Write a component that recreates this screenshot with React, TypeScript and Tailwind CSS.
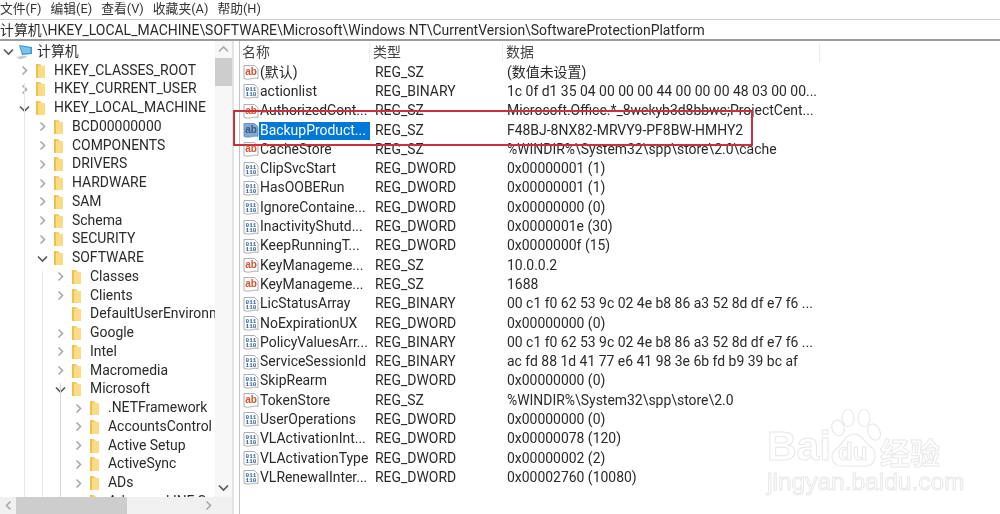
type TreeRow = { label: string; level: number; open?: boolean; leaf?: boolean };

const treeRows: TreeRow[] = [
  { label: "HKEY_CLASSES_ROOT", level: 1 },
  { label: "HKEY_CURRENT_USER", level: 1 },
  { label: "HKEY_LOCAL_MACHINE", level: 1, open: true },
  { label: "BCD00000000", level: 2 },
  { label: "COMPONENTS", level: 2 },
  { label: "DRIVERS", level: 2 },
  { label: "HARDWARE", level: 2 },
  { label: "SAM", level: 2 },
  { label: "Schema", level: 2 },
  { label: "SECURITY", level: 2 },
  { label: "SOFTWARE", level: 2, open: true },
  { label: "Classes", level: 3 },
  { label: "Clients", level: 3 },
  { label: "DefaultUserEnvironment", level: 3, leaf: true },
  { label: "Google", level: 3 },
  { label: "Intel", level: 3 },
  { label: "Macromedia", level: 3 },
  { label: "Microsoft", level: 3, open: true },
  { label: ".NETFramework", level: 4 },
  { label: "AccountsControl", level: 4 },
  { label: "Active Setup", level: 4 },
  { label: "ActiveSync", level: 4 },
  { label: "ADs", level: 4 },
  { label: "Advanced INF Setup", level: 4 },
];

const indents: Record<number, string> = {
  1: "pl-[19px]",
  2: "pl-[37px]",
  3: "pl-[55px]",
  4: "pl-[73px]",
};

const values: [string, string, string][] = [
  ["(默认)", "REG_SZ", "(数值未设置)"],
  ["actionlist", "REG_BINARY", "1c 0f d1 35 04 00 00 00 44 00 00 00 48 03 00 00..."],
  ["AuthorizedCont...", "REG_SZ", "Microsoft.Office.*_8wekyb3d8bbwe;ProjectCent..."],
  ["BackupProduct...", "REG_SZ", "F48BJ-8NX82-MRVY9-PF8BW-HMHY2"],
  ["CacheStore", "REG_SZ", "%WINDIR%\\System32\\spp\\store\\2.0\\cache"],
  ["ClipSvcStart", "REG_DWORD", "0x00000001 (1)"],
  ["HasOOBERun", "REG_DWORD", "0x00000001 (1)"],
  ["IgnoreContaine...", "REG_DWORD", "0x00000000 (0)"],
  ["InactivityShutd...", "REG_DWORD", "0x0000001e (30)"],
  ["KeepRunningT...", "REG_DWORD", "0x0000000f (15)"],
  ["KeyManageme...", "REG_SZ", "10.0.0.2"],
  ["KeyManageme...", "REG_SZ", "1688"],
  ["LicStatusArray", "REG_BINARY", "00 c1 f0 62 53 9c 02 4e b8 86 a3 52 8d df e7 f6 ..."],
  ["NoExpirationUX", "REG_DWORD", "0x00000000 (0)"],
  ["PolicyValuesArr...", "REG_BINARY", "00 c1 f0 62 53 9c 02 4e b8 86 a3 52 8d df e7 f6 ..."],
  ["ServiceSessionId", "REG_BINARY", "ac fd 88 1d 41 77 e6 41 98 3e 6b fd b9 39 bc af"],
  ["SkipRearm", "REG_DWORD", "0x00000000 (0)"],
  ["TokenStore", "REG_SZ", "%WINDIR%\\System32\\spp\\store\\2.0"],
  ["UserOperations", "REG_DWORD", "0x00000000 (0)"],
  ["VLActivationInt...", "REG_DWORD", "0x00000078 (120)"],
  ["VLActivationType", "REG_DWORD", "0x00000002 (2)"],
  ["VLRenewalInter...", "REG_DWORD", "0x00002760 (10080)"],
];

function Chevron({ dir }: { dir: "right" | "down" | "up" | "left" }) {
  const paths = {
    right: "M3.5 1.5 L7.5 5.5 L3.5 9.5",
    left: "M7.5 1.5 L3.5 5.5 L7.5 9.5",
    down: "M1 3.5 L5.5 8 L10 3.5",
    up: "M1 7.5 L5.5 3 L10 7.5",
  };
  const stroke = dir === "down" ? "#555" : "#a8a8a8";
  return (
    <svg width="11" height="11" viewBox="0 0 11 11" className="shrink-0">
      <path d={paths[dir]} fill="none" stroke={stroke} strokeWidth="1.6" />
    </svg>
  );
}

function FolderIcon() {
  return (
    <svg width="11" height="16" viewBox="0 0 11 16" className="shrink-0">
      <path d="M1 1 H5 L7 3 V15 H1 Z" fill="#f3cf6a" />
      <path d="M3 3 H10 V15 H3 Z" fill="#fbdc85" />
      <path d="M1 1 H3 V15 H1 Z" fill="#eec14f" />
    </svg>
  );
}

function ComputerIcon() {
  return (
    <svg width="18" height="18" viewBox="0 0 18 18" className="shrink-0">
      <path d="M4 2 L17 4 V11 L7 12 Z" fill="#3d9ad9" />
      <path d="M5.5 3.5 L15.5 5 V9.8 L7.5 10.6 Z" fill="#7cc4ee" />
      <path d="M1 14 L9 12.5 L13 14 L5 16.5 Z" fill="#c9ced3" />
    </svg>
  );
}

function ValueIcon({ type, selected }: { type: string; selected: boolean }) {
  const isText = type === "REG_SZ";
  return (
    <svg width="16" height="17" viewBox="0 0 16 17" className="shrink-0">
      <path
        d="M1 1.5 H11.5 L15 5 V14.5 C11 13 7 16.5 1 14.5 Z"
        fill={selected ? "#7ea9d8" : "#ffffff"}
        stroke={selected ? "#5a86b8" : "#9a9a9a"}
        strokeWidth="0.8"
      />
      {isText ? (
        <text
          x="8"
          y="11"
          textAnchor="middle"
          fontSize="10"
          fontWeight="700"
          fontFamily="'Liberation Sans', sans-serif"
          fill={selected ? "#39587e" : "#d2552f"}
        >
          ab
        </text>
      ) : (
        <>
          <text x="8" y="7.5" textAnchor="middle" fontSize="6" fontWeight="700" fontFamily="'Liberation Mono', monospace" fill="#2f5f9e">
            011
          </text>
          <text x="8" y="13" textAnchor="middle" fontSize="6" fontWeight="700" fontFamily="'Liberation Mono', monospace" fill="#2f5f9e">
            110
          </text>
        </>
      )}
    </svg>
  );
}

function Watermark() {
  const outline = "text-transparent [-webkit-text-stroke:1px_#e8e8e8]";
  return (
    <div className="absolute left-[760px] top-[405px] w-[200px] h-[90px] font-['Liberation_Sans',sans-serif]">
      <span className={`absolute left-[7px] top-[20px] text-[41px] leading-[42px] font-bold ${outline}`}>Bai</span>
      <svg width="60" height="62" viewBox="0 0 60 62" className="absolute left-[66px] top-[3px]" fill="#fff" stroke="#e8e8e8" strokeWidth="1.2">
        <ellipse cx="12" cy="20" rx="6" ry="8" transform="rotate(-20 12 20)" />
        <ellipse cx="22" cy="10" rx="6" ry="8.5" />
        <ellipse cx="38" cy="10" rx="6" ry="8.5" />
        <ellipse cx="48" cy="24" rx="6" ry="8.5" transform="rotate(-25 48 24)" />
        <path d="M28 26 C36 26 38 34 44 38 C52 43 50 58 40 58 C34 58 22 58 16 58 C7 58 2 48 10 41 C17 36 19 26 28 26 Z" />
      </svg>
      <span className={`absolute left-[78px] top-[32px] text-[24px] leading-[30px] font-bold ${outline}`}>du</span>
      <span className={`absolute left-[120px] top-[31px] text-[30px] leading-[30px] font-bold font-['Noto_Sans_CJK_SC',sans-serif] ${outline}`}>经验</span>
      <span className={`absolute left-[7px] top-[62px] text-[24.5px] leading-[30px] ${outline}`}>jingyan.baidu.com</span>
    </div>
  );
}

export default function App() {
  return (
    <div className="relative w-[1000px] h-[514px] overflow-hidden bg-white text-[#2a2a2a] text-[13.95px] leading-none font-['Roboto','Noto_Sans_CJK_SC',sans-serif] blur-[0.3px]">
      {/* Menu bar */}
      <div className="flex items-center gap-[9px] h-[19px] text-[12.8px] text-[#333]">
        <span>文件(F)</span>
        <span>编辑(E)</span>
        <span>查看(V)</span>
        <span>收藏夹(A)</span>
        <span>帮助(H)</span>
      </div>

      {/* Address bar */}
      <div className="flex items-center h-[22px] pt-[2px] border-y border-t-[#d0d0d0] border-b-[#9c9c9c] border-b-2 whitespace-nowrap">
        计算机\HKEY_LOCAL_MACHINE\SOFTWARE\Microsoft\Windows NT\CurrentVersion\SoftwareProtectionPlatform
      </div>

      <div className="flex h-[473px]">
        {/* Tree pane */}
        <div className="flex flex-col w-[232px] shrink-0">
          <div className="flex flex-1 min-h-0">
            <div className="relative flex-1 min-w-0 overflow-hidden pt-[1.4px]">
              <div className="absolute left-[24px] top-[42px] bottom-0 w-px bg-[#e6e6e6]" />
              <div className="absolute left-[42px] top-[230px] bottom-0 w-px bg-[#e6e6e6]" />
              <div className="absolute left-[60px] top-[342px] bottom-0 w-px bg-[#d8d8d8]" />
              <div className="flex items-center h-[18.75px] pl-[3px] gap-[1px] whitespace-nowrap">
                <Chevron dir="down" />
                <ComputerIcon />
                <span className="ml-[3px]">计算机</span>
              </div>
              {treeRows.map((row) => (
                <div key={row.label} className={`flex items-center h-[18.75px] whitespace-nowrap ${indents[row.level]}`}>
                  <span className="flex w-[16px] shrink-0">
                    {!row.leaf && <Chevron dir={row.open ? "down" : "right"} />}
                  </span>
                  <FolderIcon />
                  <span className="ml-[8px]">{row.label}</span>
                </div>
              ))}
            </div>
            {/* Vertical scrollbar */}
            <div className="flex flex-col items-center justify-between w-[17px] shrink-0 bg-[#f7f7f7] pt-[3px] pb-[4px]">
              <Chevron dir="up" />
              <div className="w-full h-[28px] bg-[#cdcdcd] mb-auto mt-[3px]" />
              <Chevron dir="down" />
            </div>
          </div>
          {/* Horizontal scrollbar */}
          <div className="flex items-center h-[17px] shrink-0 bg-[#f0f0f0]">
            <div className="flex justify-center w-[16px]">
              <Chevron dir="left" />
            </div>
            <div className="w-[111px] h-full bg-[#cdcdcd]" />
            <div className="flex justify-end flex-1 pr-[18px]">
              <Chevron dir="right" />
            </div>
          </div>
        </div>

        {/* Splitter */}
        <div className="w-[8px] shrink-0 border-l-2 border-r border-l-[#e4e4e4] border-r-[#c4c4c4] bg-white" />

        {/* Value list */}
        <div className="flex-1 min-w-0 whitespace-nowrap">
          <div className="flex items-center h-[21px] pt-[2px] mb-[1px] text-[#444]">
            <span className="w-[130px] pl-[2px] border-r border-[#ececec] h-full flex items-center">名称</span>
            <span className="w-[133px] pl-[3px] border-r border-[#ececec] h-full flex items-center">类型</span>
            <span className="w-[317px] pl-[3px] border-r border-[#ececec] h-full flex items-center">数据</span>
          </div>
          {values.map(([name, type, data], i) => {
            const selected = name.startsWith("BackupProduct");
            return (
              <div key={i} className="flex items-center h-[19.3px]">
                <div className="flex items-center w-[130px] pl-[3px]">
                  <ValueIcon type={type} selected={selected} />
                  <span className={`px-[1px] h-[18px] w-[112px] flex items-center ${selected ? "bg-[#0078d7] text-white" : ""}`}>
                    {name}
                  </span>
                </div>
                <span className="w-[133px] pl-[5px]">{type}</span>
                <span className="pl-[4px]">{data}</span>
              </div>
            );
          })}
        </div>
      </div>

      {/* Red highlight drawn on top of the screenshot */}
      <div className="absolute left-[233px] top-[110px] w-[520px] h-[36px] border-[2.5px] border-[#c8323c]" />

      <Watermark />
    </div>
  );
}
